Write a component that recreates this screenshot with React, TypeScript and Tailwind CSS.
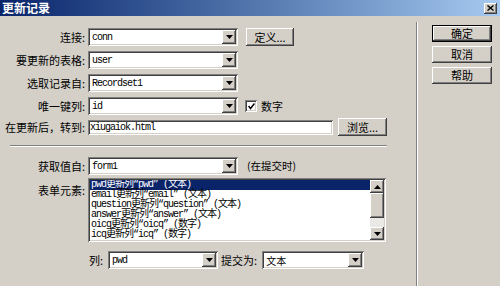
import React from "react";

const sunken =
  "shadow-[inset_1px_1px_0_#808080,inset_-1px_-1px_0_#ffffff,inset_2px_2px_0_#404040,inset_-2px_-2px_0_#d4d0c8]";
const raised =
  "shadow-[inset_-1px_-1px_0_#404040,inset_1px_1px_0_#ffffff,inset_-2px_-2px_0_#808080,inset_2px_2px_0_#d4d0c8]";

const cjk = "font-['Noto_Sans_CJK_SC',sans-serif]";
const mono =
  "font-['Liberation_Mono','Noto_Sans_CJK_SC',monospace] text-[10px] tracking-[-1px]";

const Arrow = ({ up = false }: { up?: boolean }) => (
  <svg width="7" height="4" viewBox="0 0 7 4" className={up ? "rotate-180" : ""}>
    <polygon points="0,0 7,0 3.5,4" fill="#000" />
  </svg>
);

const Select = ({ value, width, cjkValue = false }: { value: string; width: string; cjkValue?: boolean }) => (
  <div className={`flex h-[18px] items-stretch bg-white p-[2px] ${width} ${sunken}`}>
    <span
      className={`flex flex-1 items-center pl-[2px] text-black ${
        cjkValue ? `${cjk} text-[10px]` : mono
      }`}
    >
      {value}
    </span>
    <span className={`flex w-[14px] items-center justify-center bg-[#d4d0c8] ${raised}`}>
      <Arrow />
    </span>
  </div>
);

const Button = ({ label, width, def = false }: { label: string; width: string; def?: boolean }) => (
  <div
    className={`flex h-[17px] items-center justify-center bg-[#d4d0c8] text-[11px] text-black ${cjk} ${width} ${
      def ? "border border-black" : ""
    } ${raised}`}
  >
    {label}
  </div>
);

const Label = ({ text }: { text: string }) => (
  <div className={`w-[86px] shrink-0 pr-[1px] text-right text-[11px] text-black ${cjk}`}>{text}</div>
);

const items = [
  "pwd更新列“pwd” (文本)",
  "email更新列“email” (文本)",
  "question更新列“question” (文本)",
  "answer更新列“answer” (文本)",
  "oicq更新列“oicq” (数字)",
  "icq更新列“icq” (数字)",
];

export default function App() {
  return (
    <div className="flex h-[286px] w-[500px] flex-col overflow-hidden bg-[#d4d0c8]">
      <div className="flex h-[16px] shrink-0 items-center justify-between bg-gradient-to-r from-[#0a246a] to-[#a6caf0] pl-[2px] pr-[3px]">
        <span className={`text-[12px] font-bold leading-none text-white ${cjk}`}>更新记录</span>
        <span className={`flex h-[11px] w-[13px] items-center justify-center bg-[#d4d0c8] ${raised}`}>
          <svg width="7" height="6" viewBox="0 0 7 6">
            <path d="M0.5 0.5 L6.5 5.5 M6.5 0.5 L0.5 5.5" stroke="#000" strokeWidth="1.4" />
          </svg>
        </span>
      </div>

      <div className="flex flex-1">
        <div className="flex w-[416px] shrink-0 flex-col pt-[12px]">
          <div className="flex h-[18px] items-center">
            <Label text="连接:" />
            <div className="ml-[2px]">
              <Select value="conn" width="w-[150px]" />
            </div>
            <div className="ml-[8px]">
              <Button label="定义..." width="w-[48px] h-[18px]" />
            </div>
          </div>

          <div className="mt-[5px] flex h-[18px] items-center">
            <Label text="要更新的表格:" />
            <div className="ml-[2px]">
              <Select value="user" width="w-[150px]" />
            </div>
          </div>

          <div className="mt-[5px] flex h-[18px] items-center">
            <Label text="选取记录自:" />
            <div className="ml-[2px]">
              <Select value="Recordset1" width="w-[150px]" />
            </div>
          </div>

          <div className="mt-[5px] flex h-[18px] items-center">
            <Label text="唯一键列:" />
            <div className="ml-[2px]">
              <Select value="id" width="w-[150px]" />
            </div>
            <div className={`ml-[7px] flex h-[12px] w-[12px] items-center justify-center bg-white ${sunken}`}>
              <svg width="7" height="7" viewBox="0 0 7 7">
                <path d="M0.5 3 L2.5 5.5 L6.5 0.5" stroke="#000" strokeWidth="1.5" fill="none" />
              </svg>
            </div>
            <span className={`ml-[4px] text-[11px] text-black ${cjk}`}>数字</span>
          </div>

          <div className="mt-[3px] flex h-[18px] items-center">
            <Label text="在更新后，转到:" />
            <div className={`ml-[2px] flex h-[15px] w-[245px] items-center bg-white pl-[2px] ${sunken}`}>
              <span className={`${mono} text-black`}>xiugaiok.html</span>
            </div>
            <div className="ml-[5px]">
              <Button label="浏览..." width="w-[49px] h-[18px]" />
            </div>
          </div>

          <div className="ml-[10px] mt-[9px] h-[2px] w-[377px] border-t border-b border-t-[#808080] border-b-white" />

          <div className="mt-[10px] flex h-[18px] items-center">
            <Label text="获取值自:" />
            <div className="ml-[2px]">
              <Select value="form1" width="w-[150px]" />
            </div>
            <span className={`ml-[9px] text-[10.5px] text-black ${cjk}`}>(在提交时)</span>
          </div>

          <div className="mt-[3px] flex items-start">
            <div className="pt-[4px]">
              <Label text="表单元素:" />
            </div>
            <div className={`ml-[2px] flex h-[64px] w-[298px] bg-white p-[2px] ${sunken}`}>
              <div className="flex flex-1 flex-col overflow-hidden">
                {items.map((it, i) => (
                  <div
                    key={it}
                    className={`h-[10px] shrink-0 whitespace-nowrap pl-[1px] leading-[10px] ${mono} ${
                      i === 0 ? "bg-[#0a246a] text-white" : "text-black"
                    }`}
                  >
                    {it}
                  </div>
                ))}
              </div>
              <div className="flex w-[14px] flex-col">
                <div className={`flex h-[13px] items-center justify-center bg-[#d4d0c8] ${raised}`}>
                  <Arrow up />
                </div>
                <div className={`h-[25px] bg-[#d4d0c8] ${raised}`} />
                <div className="h-[9px] bg-[#ebe9e6]" />
                <div className={`flex h-[13px] items-center justify-center bg-[#d4d0c8] ${raised}`}>
                  <Arrow />
                </div>
              </div>
            </div>
          </div>

          <div className="mt-[9px] flex h-[18px] items-center pl-[89px]">
            <span className={`text-[11px] text-black ${cjk}`}>列:</span>
            <div className="ml-[5px]">
              <Select value="pwd" width="w-[110px]" />
            </div>
            <span className={`ml-[3px] text-[11px] text-black ${cjk}`}>提交为:</span>
            <div className="ml-[5px]">
              <Select value="文本" width="w-[102px]" cjkValue />
            </div>
          </div>
        </div>

        <div className="mt-[6px] flex flex-1 flex-col border-l border-l-[#808080]">
          <div className="flex flex-1 flex-col border-l border-l-white pl-[14px] pt-[3px]">
            <Button label="确定" width="w-[60px]" def />
            <div className="mt-[4px]">
              <Button label="取消" width="w-[60px]" />
            </div>
            <div className="mt-[4px]">
              <Button label="帮助" width="w-[60px]" />
            </div>
          </div>
        </div>
      </div>
    </div>
  );
}
